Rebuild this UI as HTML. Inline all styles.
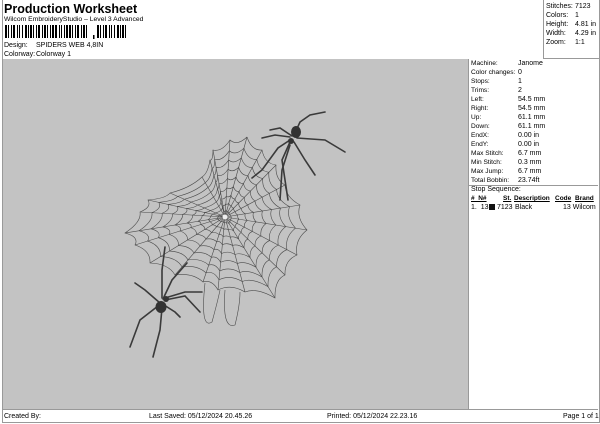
<!DOCTYPE html>
<html><head><style>
*{margin:0;padding:0}
body{width:600px;height:424px;background:#fff;font-family:"Liberation Sans",sans-serif;position:relative;overflow:hidden;color:#000}
.t{position:absolute;font-size:7px;white-space:nowrap;line-height:9px}
</style></head><body>
<div style="position:absolute;left:2px;top:0;width:596px;height:422px;border-left:1px solid #999;border-right:1px solid #999;border-bottom:1px solid #999"></div>
<div class="t" style="left:4px;top:2px;font-size:12.5px;font-weight:bold;line-height:14px">Production Worksheet</div>
<div class="t" style="left:4px;top:15px;font-size:6.8px">Wilcom EmbroideryStudio – Level 3 Advanced</div>
<svg style="position:absolute;left:5px;top:25px" width="130" height="14" id="bc"></svg>
<div class="t" style="left:4px;top:41px">Design:</div><div class="t" style="left:36px;top:41px">SPIDERS WEB 4,8IN</div>
<div class="t" style="left:4px;top:50px">Colorway:</div><div class="t" style="left:36px;top:50px">Colorway 1</div>
<div style="position:absolute;left:543px;top:0;width:55px;height:58px;border-left:1px solid #999;border-bottom:1px solid #999"></div>
<div class="t" style="left:546px;top:2px">Stitches:<br>Colors:<br>Height:<br>Width:<br>Zoom:</div>
<div class="t" style="left:575px;top:2px">7123<br>1<br>4.81 in<br>4.29 in<br>1:1</div>
<div style="position:absolute;left:3px;top:59px;width:465px;height:350px;background:#c3c3c3"></div>
<div style="position:absolute;left:468px;top:59px;width:130px;height:350px;border-left:1px solid #999"></div>
<div class="t" style="left:471px;top:59px;font-size:6.6px">Machine:<br>Color changes:<br>Stops:<br>Trims:<br>Left:<br>Right:<br>Up:<br>Down:<br>EndX:<br>EndY:<br>Max Stitch:<br>Min Stitch:<br>Max Jump:<br>Total Bobbin:</div>
<div class="t" style="left:518px;top:59px">Janome<br>0<br>1<br>2<br>54.5 mm<br>54.5 mm<br>61.1 mm<br>61.1 mm<br>0.00 in<br>0.00 in<br>6.7 mm<br>0.3 mm<br>6.7 mm<br>23.74ft</div>
<div style="position:absolute;left:469px;top:185px;width:129px;border-top:1px solid #999"></div>
<div class="t" style="left:471px;top:185px">Stop Sequence:</div>
<div class="t" style="left:471px;top:194px;font-weight:bold;text-decoration:underline;font-size:6.5px">#&nbsp;&nbsp;N#</div>
<div class="t" style="left:503px;top:194px;font-weight:bold;text-decoration:underline;font-size:6.5px">St.</div>
<div class="t" style="left:514px;top:194px;font-weight:bold;text-decoration:underline;font-size:6.5px">Description</div>
<div class="t" style="left:555px;top:194px;font-weight:bold;text-decoration:underline;font-size:6.5px">Code</div>
<div class="t" style="left:575px;top:194px;font-weight:bold;text-decoration:underline;font-size:6.5px">Brand</div>
<div class="t" style="left:471px;top:203px">1.&nbsp;&nbsp;13</div>
<div style="position:absolute;left:489px;top:204px;width:6px;height:6px;background:#111"></div>
<div class="t" style="left:497px;top:203px">7123</div>
<div class="t" style="left:515px;top:203px">Black</div>
<div class="t" style="left:563px;top:203px">13 Wilcom</div>
<div style="position:absolute;left:3px;top:409px;width:595px;border-top:1px solid #999"></div>
<div class="t" style="left:4px;top:412px">Created By:</div>
<div class="t" style="left:149px;top:412px">Last Saved: 05/12/2024 20.45.26</div>
<div class="t" style="left:327px;top:412px">Printed: 05/12/2024 22.23.16</div>
<div class="t" style="left:563px;top:412px">Page 1 of 1</div>
<svg style="position:absolute;left:0;top:0" width="600" height="424" id="art">
<g id="web" stroke="#4a4a4a" fill="none" stroke-width="0.6"></g>
<g stroke="#3a3a3a" fill="none" stroke-width="1.6" stroke-linecap="round">
<polyline points="295,133 300,122 310,115 325,112"/><polyline points="297,138 325,140 345,152"/>
<polyline points="294,142 305,160 315,175"/><polyline points="290,145 282,170 280,200"/>
<polyline points="290,140 278,148 262,170 252,178"/><polyline points="290,137 275,135 262,138"/>
<polyline points="292,136 280,128 270,130"/><polyline points="290,142 282,160 288,200"/>
<polyline points="160,303 145,290 135,283"/><polyline points="158,306 140,320 130,347"/>
<polyline points="162,308 160,330 153,357"/><polyline points="164,305 175,312 180,317"/>
<polyline points="165,300 185,296 200,312"/><polyline points="165,298 185,292 202,292"/>
<polyline points="162,298 162,270 165,247"/><polyline points="163,299 172,280 187,263"/>
</g>
<ellipse cx="296" cy="132" rx="5" ry="6" fill="#333"/><ellipse cx="291" cy="141" rx="3" ry="3" fill="#333"/>
<ellipse cx="161" cy="307" rx="5.5" ry="6" fill="#333"/><ellipse cx="166" cy="299" rx="3" ry="3" fill="#333"/>
<circle cx="225" cy="217" r="2.5" fill="#eee"/>
</svg>
<script>
var bc=document.getElementById('bc'),x=0,s='';
var w=[2,1,1,2,1,1,2,2,1,1,1,2,1,2,2,1,1,1,2,1,1,2,1,1,2,2,1,1,2,1,1,2,1,1,2,1,2,2,1,1,1,2,1,1,2,1,2,1,1,2,1,1,2,2,1,1,2,1,1,2];
for(var i=0;i<w.length&&x<85;i++){if(i%2==0)s+='<rect x="'+x+'" y="0" width="'+w[i]+'" height="13" fill="#000"/>';x+=w[i];}
s+='<rect x="88" y="10" width="1.5" height="4" fill="#000"/>';x=92;
for(i=0;i<22;i++){if(i%2==0)s+='<rect x="'+x+'" y="0" width="'+w[i]+'" height="13" fill="#000"/>';x+=w[i];}
bc.innerHTML=s;
var C=[225,217];
var P=[[247,137],[262,150],[276,165],[285,185],[300,205],[307,230],[297,255],[285,275],[275,298],[245,292],[218,290],[203,282],[175,275],[150,263],[135,245],[125,233],[140,212],[148,200],[170,193],[202,177],[210,160],[213,150],[230,140]];
var g='';
P.forEach(function(p){g+='<line x1="'+C[0]+'" y1="'+C[1]+'" x2="'+p[0]+'" y2="'+p[1]+'"/>';});
[0.08,0.17,0.27,0.38,0.5,0.62,0.74,0.86,1].forEach(function(f){
var d='';for(var i=0;i<=P.length;i++){var a=P[i%P.length],px=C[0]+f*(a[0]-C[0]),py=C[1]+f*(a[1]-C[1]);
if(i==0)d+='M'+px+' '+py;else{var b=P[i-1],mx=C[0]+f*0.9*((a[0]+b[0])/2-C[0]),my=C[1]+f*0.9*((a[1]+b[1])/2-C[1]);d+=' Q'+mx+' '+my+' '+px+' '+py;}}
g+='<path d="'+d+'"/>';});
g+='<path d="M205 283 Q200 330 212 322 Q218 300 220 290 M225 290 Q222 330 235 325 Q240 305 240 292"/>';
document.getElementById('web').innerHTML=g;
</script>
</body></html>
